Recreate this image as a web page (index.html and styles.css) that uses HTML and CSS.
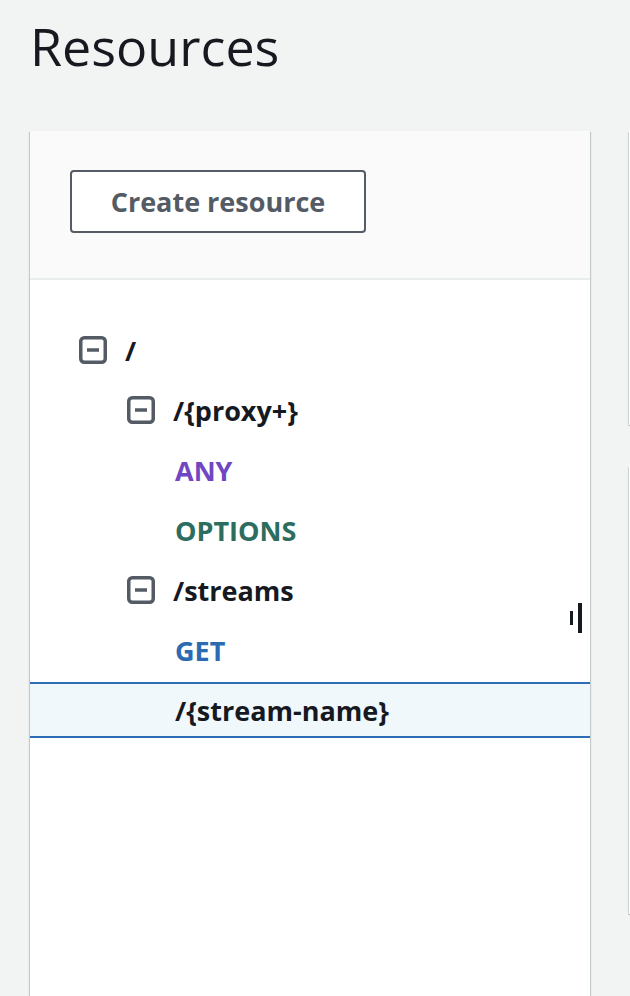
FILE: index.html
```html
<!DOCTYPE html>
<html lang="en">
<head>
<meta charset="utf-8">
<title>Resources</title>
<link rel="stylesheet" href="styles.css">
</head>
<body>
<div class="page">
  <h1 class="title">Resources</h1>
  <div class="layout">
    <section class="panel">
      <div class="panel-header">
        <button class="btn">Create resource</button>
      </div>
      <ul class="tree">
        <li class="row lvl0">
          <svg class="toggle" viewBox="0 0 28 28" width="28" height="28"><rect x="1.75" y="1.75" width="24.5" height="24.5" rx="3.5" fill="none" stroke="#545b64" stroke-width="3.5"/><line x1="8" y1="14" x2="20" y2="14" stroke="#545b64" stroke-width="3.5"/></svg>
          <span class="path">/</span>
        </li>
        <li class="row lvl1">
          <svg class="toggle" viewBox="0 0 28 28" width="28" height="28"><rect x="1.75" y="1.75" width="24.5" height="24.5" rx="3.5" fill="none" stroke="#545b64" stroke-width="3.5"/><line x1="8" y1="14" x2="20" y2="14" stroke="#545b64" stroke-width="3.5"/></svg>
          <span class="path">/{proxy+}</span>
        </li>
        <li class="row lvl2"><span class="method any">ANY</span></li>
        <li class="row lvl2"><span class="method options">OPTIONS</span></li>
        <li class="row lvl1">
          <svg class="toggle" viewBox="0 0 28 28" width="28" height="28"><rect x="1.75" y="1.75" width="24.5" height="24.5" rx="3.5" fill="none" stroke="#545b64" stroke-width="3.5"/><line x1="8" y1="14" x2="20" y2="14" stroke="#545b64" stroke-width="3.5"/></svg>
          <span class="path">/streams</span>
        </li>
        <li class="row lvl2"><span class="method get">GET</span></li>
        <li class="row lvl2 selected-slot">
          <div class="selected"><span class="path">/{stream-name}</span></div>
        </li>
      </ul>
      <div class="resizer"><span class="bar short"></span><span class="bar tall"></span></div>
    </section>
    <aside class="side">
      <div class="card card-a"></div>
      <div class="card card-b"></div>
    </aside>
  </div>
</div>
</body>
</html>
```

FILE: styles.css
```css
* { box-sizing: border-box; }
html, body {
  margin: 0;
  padding: 0;
  background: #f2f3f3;
  height: 996px;
  overflow: hidden;
}
body {
  font-family: "Open Sans", "Noto Sans", sans-serif;
  color: #16191f;
}
.page {
  padding-top: 16px;
}
.title {
  margin: 0 0 55px 30px;
  font-size: 52px;
  line-height: 60px;
  font-weight: 500;
  color: #16191f;
}
.layout {
  display: flex;
  align-items: flex-start;
  margin-left: 30px;
}
.panel {
  position: relative;
  width: 560px;
  height: 900px;
  background: #ffffff;
  box-shadow: 0 1px 1px 0 rgba(0, 28, 36, 0.3), 1px 1px 1px 0 rgba(0, 28, 36, 0.15), -1px 1px 1px 0 rgba(0, 28, 36, 0.15);
  flex: none;
}
.panel-header {
  background: #fafafa;
  padding: 39px 40px 45px;
  border-bottom: 2px solid #eaeded;
}
.btn {
  display: block;
  width: 296px;
  height: 63px;
  border: 2px solid #545b64;
  border-radius: 4px;
  background: #ffffff;
  color: #545b64;
  font-family: "Open Sans", "Noto Sans", sans-serif;
  font-weight: 700;
  font-size: 27px;
  padding: 0;
  text-align: center;
}
.tree {
  list-style: none;
  margin: 0;
  padding: 40px 0 0 0;
}
.row {
  height: 60px;
  display: flex;
  align-items: center;
  gap: 18px;
  font-size: 27px;
  font-weight: 700;
}
.lvl0 { padding-left: 49px; }
.lvl1 { padding-left: 97px; }
.lvl2 { padding-left: 145px; }
.toggle { flex: none; display: block; }
.path { color: #16191f; }
.method.any { color: #6f47c2; }
.method.options { color: #2c6d5f; }
.method.get { color: #2a6bb1; }
.selected-slot {
  padding-left: 0;
  align-items: stretch;
}
.selected {
  flex: 1;
  margin: 2px 0;
  background: #f1f8fc;
  border-top: 2px solid #2d6db3;
  border-bottom: 2px solid #2d6db3;
  display: flex;
  align-items: center;
  padding-left: 145px;
}
.resizer {
  position: absolute;
  left: 540px;
  top: 472px;
  display: flex;
  align-items: center;
  gap: 5px;
  height: 30px;
}
.bar {
  display: block;
  background: #16191f;
}
.bar.short { width: 3px; height: 14px; }
.bar.tall { width: 4px; height: 30px; }
.side {
  margin-left: 39px;
  display: flex;
  flex-direction: column;
  gap: 41px;
  width: 40px;
}
.card {
  background: #ffffff;
  box-shadow: 0 1px 1px 0 rgba(0, 28, 36, 0.3), 1px 1px 1px 0 rgba(0, 28, 36, 0.15), -1px 1px 1px 0 rgba(0, 28, 36, 0.15);
}
.card-a { height: 294px; }
.card-b { height: 448px; }
```
